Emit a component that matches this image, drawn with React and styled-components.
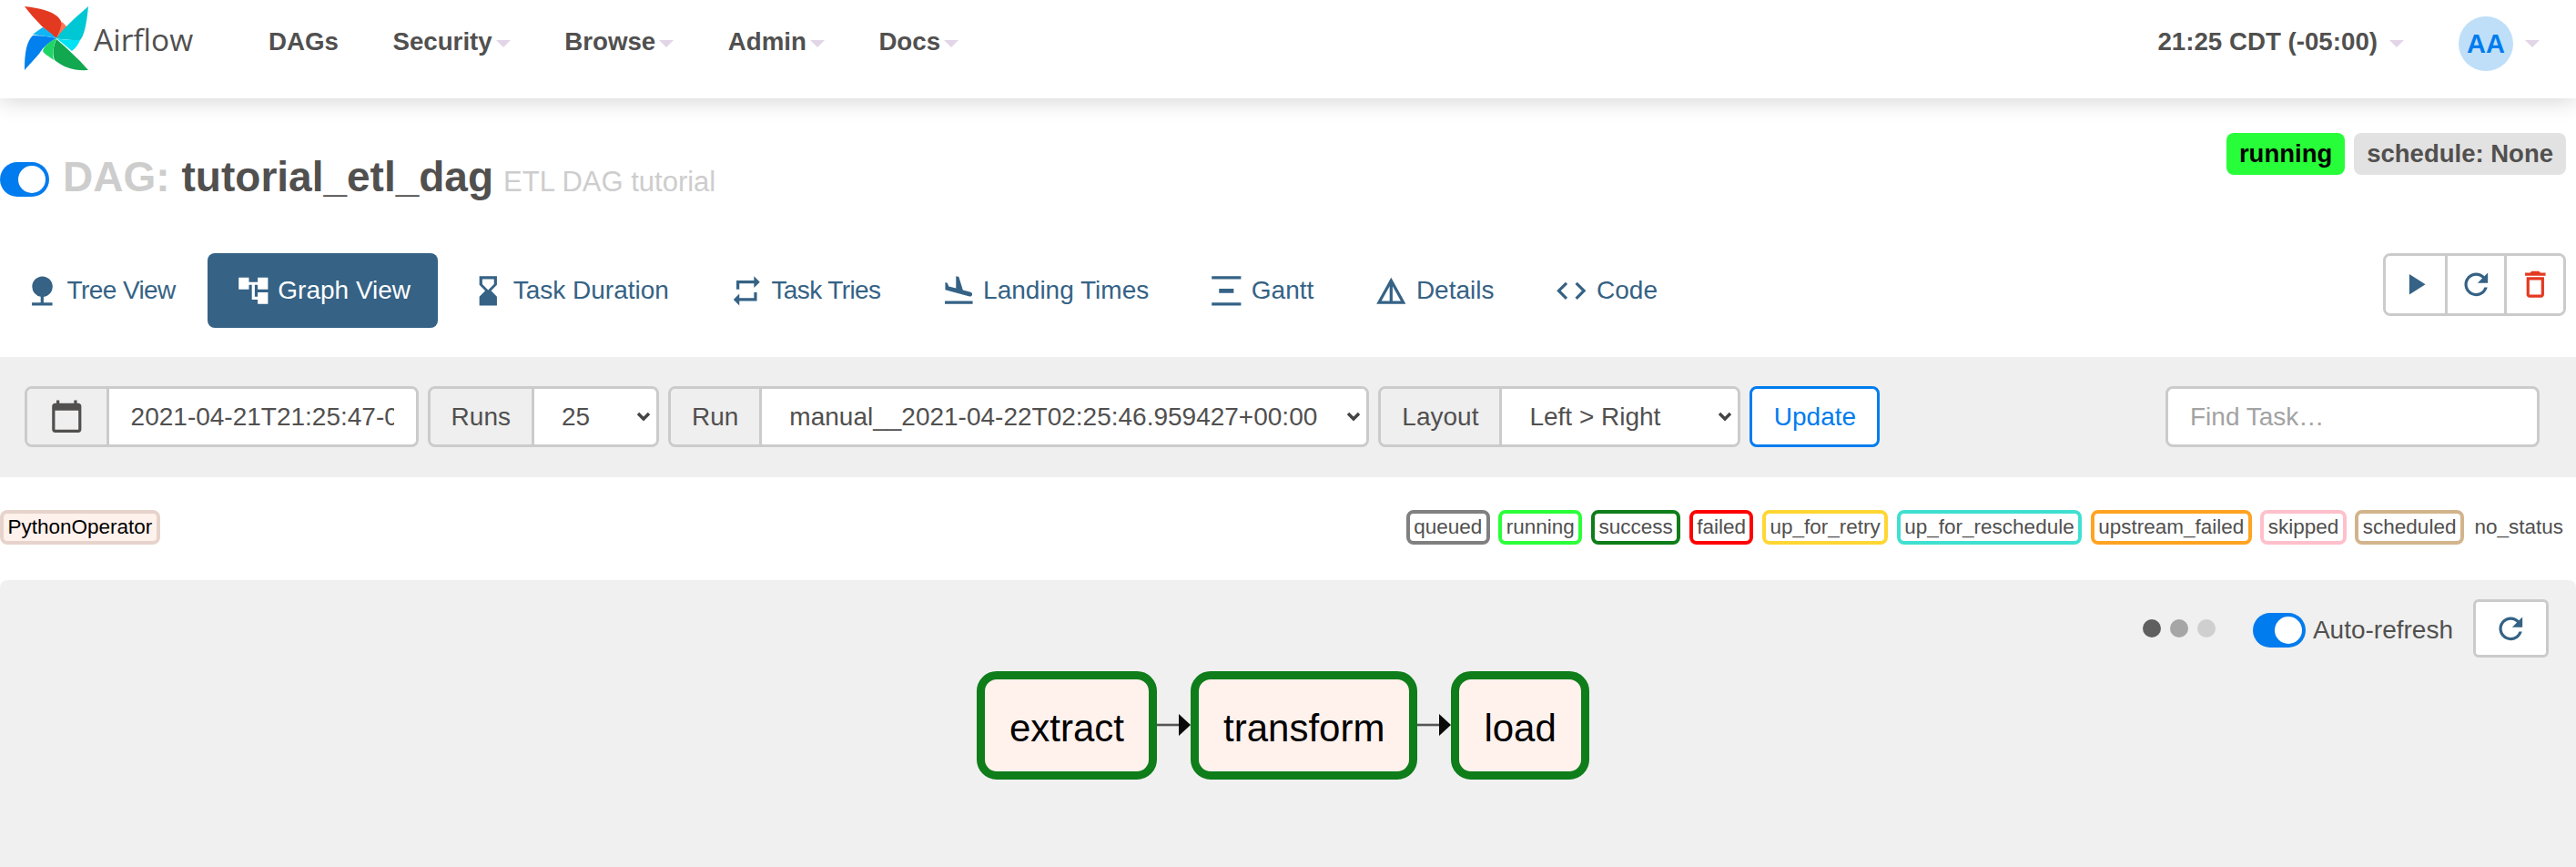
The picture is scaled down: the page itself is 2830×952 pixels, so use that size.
import React from "react";
import styled, { createGlobalStyle } from "styled-components";
import {
  MdNature, MdAccountTree, MdHourglassBottom, MdRepeat, MdFlightLand,
  MdVerticalDistribute, MdDetails, MdCode, MdCalendarToday, MdPlayArrow,
  MdRefresh, MdDeleteOutline,
} from "react-icons/md";

const ink = "#51504f";
const steel = "#356285";
const line = "#cbcbcb";
const chevron = encodeURIComponent(
  '<svg xmlns="http://www.w3.org/2000/svg" width="16" height="11" viewBox="0 0 16 11"><path d="M2 2l6 6 6-6" fill="none" stroke="#444" stroke-width="3.4"/></svg>'
);

const Global = createGlobalStyle`
  html, body { margin: 0; padding: 0; background: #fff; overflow: hidden; }
  body { font-family: "Liberation Sans", Arial, sans-serif; color: ${ink}; font-size: 28px; }
  * { box-sizing: border-box; }
`;

const Page = styled.div`
  width: 2830px;
  height: 952px;
  display: flex;
  flex-direction: column;
  overflow: hidden;
`;

const Nav = styled.header`
  height: 108px;
  flex: none;
  display: flex;
  align-items: center;
  padding: 0 40px 16px 26px;
  background: #fff;
  box-shadow: 0 2px 24px rgba(0, 0, 0, 0.18);
  position: relative;
  z-index: 1;
`;
const Brand = styled.div`
  display: flex;
  align-items: center;
  gap: 6px;
  width: 269px;
  margin-bottom: 8px;
`;
const BrandName = styled.span`
  font-family: "Open Sans", sans-serif;
  font-size: 33.5px;
  color: ${ink};
  margin-bottom: -1px;
`;
const NavMenu = styled.nav`
  display: flex;
  align-items: center;
  gap: 59.5px;
`;
const NavItem = styled.span`
  display: flex;
  align-items: center;
  font-weight: bold;
  font-size: 27.7px;
  color: ${ink};
`;
const Caret = styled.i`
  display: block;
  width: 0;
  height: 0;
  margin-left: ${(p) => p.$gap || 4}px;
  margin-top: 4px;
  border-left: 8px solid transparent;
  border-right: 8px solid transparent;
  border-top: 8px solid #e2d5e8;
`;
const NavRight = styled.div`
  margin-left: auto;
  display: flex;
  align-items: center;
`;
const Avatar = styled.span`
  width: 60px;
  height: 60px;
  margin-left: 60px;
  margin-top: 4px;
  border-radius: 50%;
  background: #bfdff9;
  color: #017cee;
  font-weight: bold;
  font-size: 29px;
  display: flex;
  align-items: center;
  justify-content: center;
`;

const TitleRow = styled.div`
  height: 170px;
  flex: none;
  display: flex;
  justify-content: space-between;
  align-items: flex-start;
  padding: 38px 11px 0 0;
`;
const Title = styled.h1`
  margin: 23px 0 0;
  display: flex;
  align-items: baseline;
  font-size: 46px;
  line-height: 50px;
  font-weight: bold;
  color: ${ink};
`;
const Toggle = styled.span`
  display: block;
  position: relative;
  flex: none;
  align-self: center;
  width: ${(p) => p.$w || 54}px;
  height: 38px;
  border-radius: 19px;
  background: #017cee;
  &::after {
    content: "";
    position: absolute;
    right: 4px;
    top: 4px;
    width: 30px;
    height: 30px;
    border-radius: 50%;
    background: #fff;
  }
`;
const Muted = styled.span`
  color: #cdcdcd;
  margin: 0 13px 0 15px;
`;
const TitleNote = styled.small`
  font-size: 31px;
  font-weight: normal;
  color: #cdcdcd;
  margin-left: 11px;
`;
const Badges = styled.div`
  display: flex;
  gap: 10px;
`;
const Badge = styled.span`
  height: 46px;
  padding: 0 14px;
  border-radius: 8px;
  display: flex;
  align-items: center;
  font-weight: bold;
  font-size: 27.5px;
  background: ${(p) => p.$bg};
  color: ${(p) => p.$fg};
`;

const TabRow = styled.div`
  height: 82px;
  flex: none;
  display: flex;
  align-items: flex-start;
  gap: 5px;
  margin-left: -4px;
  padding-right: 11px;
`;
const Tab = styled.a`
  height: 82px;
  padding: 0 30px 0 31px;
  display: flex;
  align-items: center;
  gap: 8px;
  border-radius: 8px;
  letter-spacing: ${(p) => (p.$tight ? "-0.6px" : "0")};
  color: ${(p) => (p.$active ? "#fff" : steel)};
  background: ${(p) => (p.$active ? steel : "transparent")};
  svg { font-size: 38.6px; flex: none; }
`;
const ActionGroup = styled.div`
  margin-left: auto;
  display: flex;
  height: 69px;
  border: 3px solid ${line};
  border-radius: 8px;
  overflow: hidden;
`;
const ActionButton = styled.button`
  width: 65px;
  padding: 0;
  background: #fff;
  border: 0;
  border-left: ${(p) => (p.$first ? "0" : `3px solid ${line}`)};
  color: ${(p) => p.$color || steel};
  display: flex;
  align-items: center;
  justify-content: center;
  svg { font-size: 38.6px; }
`;

const FilterBar = styled.div`
  margin-top: 32px;
  height: 132px;
  flex: none;
  display: flex;
  align-items: flex-start;
  gap: 10px;
  padding: 32px 40px 0 27px;
  background: #efefef;
`;
const Group = styled.div`
  height: 67px;
  display: flex;
  border: 3px solid ${line};
  border-radius: 8px;
  overflow: hidden;
`;
const Addon = styled.span`
  display: flex;
  align-items: center;
  padding: 0 ${(p) => p.$pad || 23}px;
  background: #efefef;
  border-right: 3px solid ${line};
  color: ${ink};
  svg { font-size: 38.6px; display: block; }
`;
const DateInput = styled.input`
  width: ${(p) => p.$w}px;
  border: 0;
  outline: 0;
  padding: 0 24px;
  background: #fff;
  font: inherit;
  color: ${ink};
`;
const Select = styled.select`
  width: ${(p) => p.$w}px;
  appearance: none;
  border: 0;
  outline: 0;
  padding: 0 30px 0 ${(p) => p.$pad}px;
  font: inherit;
  color: ${ink};
  background: #fff url("data:image/svg+xml,${chevron}") no-repeat right 6px center;
`;
const UpdateButton = styled.button`
  width: 143px;
  height: 67px;
  padding: 0;
  border: 3px solid #017cee;
  border-radius: 8px;
  background: #fff;
  color: #017cee;
  font: inherit;
`;
const SearchInput = styled.input`
  margin-left: auto;
  width: 411px;
  height: 67px;
  padding: 0 24px;
  border: 3px solid ${line};
  border-radius: 8px;
  outline: 0;
  font: inherit;
  color: ${ink};
  background: #fff;
  &::placeholder { color: #a3a3a3; opacity: 1; }
`;

const LegendRow = styled.div`
  height: 113px;
  flex: none;
  display: flex;
  justify-content: space-between;
  align-items: flex-start;
  padding: 36px 14px 0 0;
  font-size: 22.5px;
  color: ${ink};
`;
const LegendGroup = styled.div`
  display: flex;
  gap: 9.5px;
`;
const Chip = styled.span`
  height: 38px;
  padding: 0 4.5px;
  display: flex;
  align-items: center;
  background: ${(p) => p.$bg || "#fff"};
  border: 4px solid ${(p) => p.$color};
  border-radius: 8px;
  color: ${(p) => p.$fg || ink};
`;
const Plain = styled.span`
  height: 38px;
  margin-left: 2px;
  display: flex;
  align-items: center;
`;

const GraphPanel = styled.section`
  flex: 1;
  background: #f0f0f0;
  border-radius: 8px 8px 0 0;
`;
const GraphToolbar = styled.div`
  height: 100px;
  padding: 21px 30px 0 0;
  display: flex;
  justify-content: flex-end;
  align-items: flex-start;
`;
const Dots = styled.div`
  display: flex;
  gap: 10px;
  margin: 22px 41px 0 0;
`;
const Dot = styled.i`
  display: block;
  width: 20px;
  height: 20px;
  border-radius: 50%;
  background: ${(p) => p.$c};
`;
const AutoRefresh = styled.label`
  display: flex;
  align-items: center;
  gap: 8px;
  height: 38px;
  margin: 15px 22px 0 0;
  color: ${ink};
`;
const RefreshButton = styled.button`
  width: 83px;
  height: 64px;
  padding: 0;
  border: 3px solid ${line};
  border-radius: 6px;
  background: #fff;
  color: ${steel};
  display: flex;
  align-items: center;
  justify-content: center;
  svg { font-size: 38.6px; }
`;
const Graph = styled.div`
  display: flex;
  align-items: center;
  margin-left: 1073px;
`;
const TaskNode = styled.div`
  height: 119px;
  padding: 6px 27px 0;
  display: flex;
  align-items: center;
  border: 9px solid #0e7d1a;
  border-radius: 22px;
  background: #fff1ec;
  color: #000;
  font-size: 42px;
`;
const EdgeSvg = styled.svg`
  width: 37px;
  height: 26px;
  flex: none;
  display: block;
  margin-top: -1px;
`;

const Logo = () => (
  <svg width="71" height="72" viewBox="0 0 71 72" aria-hidden="true">
    <path d="M1 1 C18 3 30 6 37 12 C41 16 43 20 42 25 L36 36 C27 30 12 16 1 1Z" fill="#e43921" />
    <path d="M42 18 C46 21 50 27 50 29 L36 36 C39 30 41 24 42 18Z" fill="#ff7557" />
    <path d="M71 1 C69 22 66 34 62 38 C56 38 46 38 36 36 C40 30 44 26 50 20 C56 14 64 7 71 1Z" fill="#00c7d4" />
    <path d="M36 36 C44 38 52 38 62 38 C60 43 57 47 53 50 Z" fill="#00e2f5" />
    <path d="M71 71 C55 72 44 68 34 60 C31 52 33 44 36 37 C45 45 60 58 71 71Z" fill="#11a850" />
    <path d="M36 36 C33 44 31 52 33 60 C28 56 22 53 21 50 C23 44 28 40 36 36Z" fill="#1ed665" />
    <path d="M1 71 C1 52 3 40 10 33 C18 33 28 34 36 36 C28 40 22 45 17 53 C12 59 6 65 1 71Z" fill="#0280ed" />
    <path d="M36 36 C28 34 18 33 10 32 C13 29 17 27 21 24 C27 28 32 32 36 36Z" fill="#11b5f5" />
  </svg>
);

const Edge = () => (
  <EdgeSvg viewBox="0 0 37 26" aria-hidden="true">
    <path d="M0 13H26" stroke="#555" strokeWidth="2.6" />
    <path d="M24 1 L37 13 L24 25Z" fill="#0a0a0a" />
  </EdgeSvg>
);

const tabs = [
  { Icon: MdNature, label: "Tree View", tight: true },
  { Icon: MdAccountTree, label: "Graph View", active: true },
  { Icon: MdHourglassBottom, label: "Task Duration" },
  { Icon: MdRepeat, label: "Task Tries", tight: true },
  { Icon: MdFlightLand, label: "Landing Times" },
  { Icon: MdVerticalDistribute, label: "Gantt" },
  { Icon: MdDetails, label: "Details" },
  { Icon: MdCode, label: "Code" },
];

const states = [
  ["queued", "#808080"],
  ["running", "#2bff39"],
  ["success", "#0e7d1a"],
  ["failed", "#ff0000"],
  ["up_for_retry", "#ffd633"],
  ["up_for_reschedule", "#40e0d0"],
  ["upstream_failed", "#ffa322"],
  ["skipped", "#ffc0cb"],
  ["scheduled", "#d2b48c"],
];

export default function App() {
  return (
    <Page>
      <Global />
      <Nav>
        <Brand>
          <Logo />
          <BrandName>Airflow</BrandName>
        </Brand>
        <NavMenu>
          <NavItem>DAGs</NavItem>
          {["Security", "Browse", "Admin", "Docs"].map((m) => (
            <NavItem key={m}>{m}<Caret /></NavItem>
          ))}
        </NavMenu>
        <NavRight>
          <NavItem>21:25 CDT (-05:00)<Caret $gap={13} /></NavItem>
          <Avatar>AA</Avatar>
          <Caret $gap={13} />
        </NavRight>
      </Nav>

      <TitleRow>
        <Title>
          <Toggle />
          <Muted>DAG:</Muted>
          tutorial_etl_dag
          <TitleNote>ETL DAG tutorial</TitleNote>
        </Title>
        <Badges>
          <Badge $bg="#28fd39" $fg="#000">running</Badge>
          <Badge $bg="#e2e2e2" $fg={ink}>schedule: None</Badge>
        </Badges>
      </TitleRow>

      <TabRow>
        {tabs.map(({ Icon, label, active, tight }) => (
          <Tab key={label} $active={active} $tight={tight}><Icon />{label}</Tab>
        ))}
        <ActionGroup>
          <ActionButton $first><MdPlayArrow /></ActionButton>
          <ActionButton><MdRefresh /></ActionButton>
          <ActionButton $color="#e43921"><MdDeleteOutline /></ActionButton>
        </ActionGroup>
      </TabRow>

      <FilterBar>
        <Group>
          <Addon $pad={24}><MdCalendarToday /></Addon>
          <DateInput $w={337} readOnly value="2021-04-21T21:25:47-05:00" />
        </Group>
        <Group>
          <Addon>Runs</Addon>
          <Select $w={134} $pad={30} defaultValue="25"><option>25</option></Select>
        </Group>
        <Group>
          <Addon>Run</Addon>
          <Select $w={664} $pad={30}><option>manual__2021-04-22T02:25:46.959427+00:00</option></Select>
        </Group>
        <Group>
          <Addon>Layout</Addon>
          <Select $w={259} $pad={30}><option>{"Left > Right"}</option></Select>
        </Group>
        <UpdateButton>Update</UpdateButton>
        <SearchInput placeholder="Find Task…" />
      </FilterBar>

      <LegendRow>
        <Chip $color="#e6d4cc" $bg="#fff1ec" $fg="#000">PythonOperator</Chip>
        <LegendGroup>
          {states.map(([s, c]) => (
            <Chip key={s} $color={c}>{s}</Chip>
          ))}
          <Plain>no_status</Plain>
        </LegendGroup>
      </LegendRow>

      <GraphPanel>
        <GraphToolbar>
          <Dots>
            <Dot $c="#5f5f5f" />
            <Dot $c="#a6a6a6" />
            <Dot $c="#cfcfcf" />
          </Dots>
          <AutoRefresh><Toggle $w={58} />Auto-refresh</AutoRefresh>
          <RefreshButton><MdRefresh /></RefreshButton>
        </GraphToolbar>
        <Graph>
          <TaskNode>extract</TaskNode>
          <Edge />
          <TaskNode>transform</TaskNode>
          <Edge />
          <TaskNode>load</TaskNode>
        </Graph>
      </GraphPanel>
    </Page>
  );
}
